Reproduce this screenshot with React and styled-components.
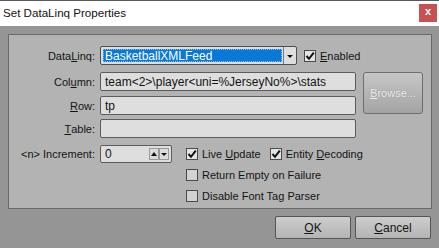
import React from "react";
import styled, { createGlobalStyle } from "styled-components";

const Global = createGlobalStyle`
  html, body { margin: 0; padding: 0; background: #959595; }
  body { font-family: "Liberation Sans", Arial, sans-serif; }
  * { box-sizing: border-box; }
`;

const Window = styled.div`
  width: 439px;
  height: 248px;
  background: #959595;
  display: flex;
  flex-direction: column;
  overflow: hidden;
`;

const TitleBar = styled.div`
  height: 26px;
  background: #ffffff;
  border-top: 1px solid #5a5a5a;
  display: flex;
  align-items: center;
  justify-content: space-between;
  padding: 0 2px 0 3px;
`;

const Title = styled.div`
  font-size: 11.6px;
  color: #111;
  margin-top: -2px;
`;

const CloseButton = styled.div`
  width: 18px;
  height: 18px;
  margin-top: -2px;
  background: #c75050;
  color: #fff;
  font-size: 11px;
  font-weight: bold;
  display: flex;
  align-items: center;
  justify-content: center;
  line-height: 1;
  padding-bottom: 2px;
`;

const Body = styled.div`
  flex: 1;
  padding: 8px 7px 0 8px;
  display: flex;
  flex-direction: column;
`;

const Panel = styled.div`
  background: #b3b3b3;
  border: 1px solid #6b6b6b;
  padding: 11px 0 2px 0;
  display: flex;
  flex-direction: column;
  font-size: 11px;
  color: #141414;
`;

const TopGrid = styled.div`
  display: grid;
  grid-template-columns: 86px 256px 62px;
  grid-template-rows: 26px 24px 23px 19px;
  column-gap: 5px;
  align-items: start;
`;

const Label = styled.div`
  height: 19px;
  display: flex;
  align-items: center;
  justify-content: flex-end;
  white-space: nowrap;
`;

const Key = styled.span`
  text-decoration: underline;
  text-underline-offset: 1px;
`;

const TextInput = styled.div`
  height: 19px;
  background: #dedede;
  border: 1px solid #5c5c5c;
  border-radius: 2px;
  display: flex;
  align-items: center;
  padding-left: 4px;
  white-space: nowrap;
  overflow: hidden;
  font-size: ${(p) => (p.$large ? "12px" : "11px")};
`;

const ComboLine = styled.div`
  grid-column: 2 / 4;
  display: flex;
  align-items: center;
  gap: 7px;
`;

const Combo = styled.div`
  width: 197px;
  height: 19px;
  border: 1px solid #4e4e4e;
  border-radius: 2px;
  background: #dedede;
  display: flex;
`;

const ComboValue = styled.div`
  flex: 1;
  margin: 2px 1px 2px 2px;
  background: #0a78d6;
  color: #fff;
  font-size: 12px;
  display: flex;
  align-items: center;
  padding-left: 2px;
  outline: 1px dotted rgba(255, 255, 255, 0.5);
  outline-offset: -1px;
`;

const ComboArrow = styled.div`
  width: 13px;
  border-left: 1px solid #7a7a7a;
  display: flex;
  align-items: center;
  justify-content: center;
  &::after {
    content: "";
    border-left: 3px solid transparent;
    border-right: 3px solid transparent;
    border-top: 3px solid #111;
    margin-top: 1px;
  }
`;

const CheckLabel = styled.label`
  display: flex;
  align-items: center;
  gap: 4px;
  white-space: nowrap;
`;

const Box = styled.span`
  width: 12px;
  height: 12px;
  border: 1px solid #4a4a4a;
  background: ${(p) => (p.$checked ? "#e4e4e4" : "#d2d2d2")};
  display: inline-flex;
  align-items: center;
  justify-content: center;
`;

const BrowseButton = styled.div`
  grid-column: 3;
  grid-row: 2 / 4;
  margin-left: 2px;
  height: 42px;
  border: 1px solid #6e6e6e;
  border-radius: 3px;
  background: linear-gradient(#c6c6c6, #a4a4a4);
  color: #ececec;
  display: flex;
  align-items: center;
  justify-content: center;
  font-size: 11px;
  text-shadow: 0 0 1px rgba(120, 120, 120, 0.6);
`;

const BottomGrid = styled.div`
  margin-top: 5px;
  display: grid;
  grid-template-columns: 86px 72px auto;
  grid-auto-rows: 21px;
  column-gap: 5px;
  align-items: center;
`;

const Spinner = styled.div`
  height: 18px;
  border: 1px solid #5c5c5c;
  border-radius: 2px;
  background: #dedede;
  display: flex;
  align-items: center;
  padding: 0 2px 0 4px;
  font-size: 12px;
`;

const SpinValue = styled.div`
  flex: 1;
`;

const SpinButton = styled.div`
  width: 10px;
  height: 12px;
  border: 1px solid #9a9a9a;
  background: #dcdcdc;
  display: flex;
  align-items: ${(p) => (p.$up ? "flex-start" : "flex-end")};
  justify-content: center;
  padding: 3px 0;
  &::after {
    content: "";
    border-left: 3px solid transparent;
    border-right: 3px solid transparent;
    ${(p) =>
      p.$up ? "border-bottom: 4px solid #111;" : "border-top: 3px solid #111;"}
  }
`;

const Checks = styled.div`
  grid-column: 3;
  margin-left: 9px;
  display: flex;
  gap: 9px;
`;

const Footer = styled.div`
  display: flex;
  justify-content: flex-end;
  gap: 4px;
  padding-top: 7px;
  padding-right: 1px;
`;

const Button = styled.div`
  width: 76px;
  height: 23px;
  border: 1px solid #555;
  border-radius: 2px;
  background: linear-gradient(#cdcdcd, #b4b4b4);
  display: flex;
  align-items: center;
  justify-content: center;
  font-size: 12px;
  color: #141414;
`;

const Check = () => (
  <svg width="10" height="10" viewBox="0 0 10 10">
    <path d="M1.5 5 L4 7.8 L8.8 1.6" fill="none" stroke="#111" strokeWidth="2" />
  </svg>
);

const CheckItem = ({ checked, children }) => (
  <CheckLabel>
    <Box $checked={checked}>{checked && <Check />}</Box>
    <span>{children}</span>
  </CheckLabel>
);

export default function App() {
  return (
    <>
      <Global />
      <Window>
        <TitleBar>
          <Title>Set DataLinq Properties</Title>
          <CloseButton>x</CloseButton>
        </TitleBar>
        <Body>
          <Panel>
            <TopGrid>
              <Label>
                Data<Key>L</Key>inq:
              </Label>
              <ComboLine>
                <Combo>
                  <ComboValue>BasketballXMLFeed</ComboValue>
                  <ComboArrow />
                </Combo>
                <CheckItem checked>
                  <Key>E</Key>nabled
                </CheckItem>
              </ComboLine>

              <Label>
                Col<Key>u</Key>mn:
              </Label>
              <TextInput $large>team&lt;2&gt;\player&lt;uni=%JerseyNo%&gt;\stats</TextInput>
              <BrowseButton>
                <span>
                  <Key>B</Key>rowse...
                </span>
              </BrowseButton>

              <Label>
                <Key>R</Key>ow:
              </Label>
              <TextInput $large>tp</TextInput>

              <Label>
                <Key>T</Key>able:
              </Label>
              <TextInput />
            </TopGrid>

            <BottomGrid>
              <Label>&lt;n&gt; Increment:</Label>
              <Spinner>
                <SpinValue>0</SpinValue>
                <SpinButton $up />
                <SpinButton />
              </Spinner>
              <Checks>
                <CheckItem checked>
                  Live <Key>U</Key>pdate
                </CheckItem>
                <CheckItem checked>
                  Entity <Key>D</Key>ecoding
                </CheckItem>
              </Checks>
              <Checks>
                <CheckItem>Return Empty on Failure</CheckItem>
              </Checks>
              <Checks>
                <CheckItem>Disable Font Tag Parser</CheckItem>
              </Checks>
            </BottomGrid>
          </Panel>
          <Footer>
            <Button>
              <span>
                <Key>O</Key>K
              </span>
            </Button>
            <Button>
              <span>
                <Key>C</Key>ancel
              </span>
            </Button>
          </Footer>
        </Body>
      </Window>
    </>
  );
}
